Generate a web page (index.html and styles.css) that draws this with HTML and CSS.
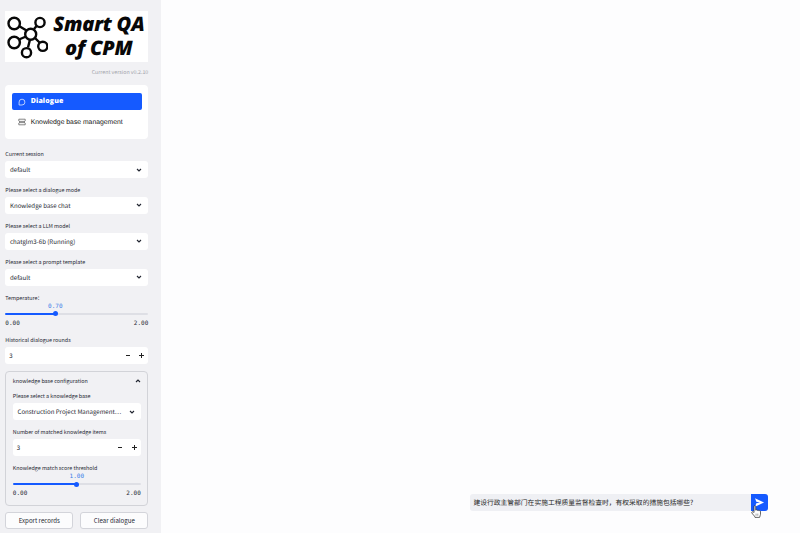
FILE: index.html
```html
<!DOCTYPE html>
<html lang="en">
<head>
<meta charset="utf-8">
<title>Smart QA of CPM</title>
<link rel="stylesheet" href="styles.css">
</head>
<body>
<svg class="defs" width="0" height="0"><symbol id="chev" viewBox="0 0 6 6"><path d="M1 2l2 2 2-2" fill="none" stroke="#222631" stroke-width="1.15"/></symbol></svg>
<aside class="sidebar">
  <div class="logo">
    <svg class="mark" width="44" height="49" viewBox="0 0 44 49" fill="none" stroke="#080808" stroke-width="2.4">
      <path d="M15 15l7.500 4.500M33 14.500l-3 3.500M15 28.500l7-3M26 28.500l-2 8M30.500 26.500l5 5"/>
      <circle cx="10.200" cy="12.500" r="5.700"/><circle cx="36" cy="11.500" r="4.600"/><circle cx="26.700" cy="23.300" r="5.500"/><circle cx="10.200" cy="31.500" r="5.700"/><circle cx="22.500" cy="41.700" r="4.600"/><circle cx="38.800" cy="35.300" r="4.600"/>
    </svg>
    <div class="wordmark">Smart QA<br>of CPM</div>
  </div>
  <div class="version">Current version v0.2.10</div>
  <nav class="nav">
    <a class="item active"><svg width="8" height="8" viewBox="0 0 8 8"><path d="M1.100 7V4a2.900 2.900 0 1 1 2.900 3z" fill="none" stroke="#dfe8ff" stroke-width=".8"/></svg><span>Dialogue</span></a>
    <a class="item"><svg width="8" height="8" viewBox="0 0 8 8" fill="none" stroke="#555" stroke-width=".7"><path d="M.8 1.200h6.400v1.700l-.7.500H1.500l-.7-.5zM1.500 3.400v1.200M6.500 3.400v1.200M.8 6.800h6.400V5.100l-.7-.5H1.500l-.7.5z"/></svg><span>Knowledge base management</span></a>
  </nav>
  <div class="field"><label>Current session</label><div class="control">default<svg><use href="#chev"/></svg></div></div>
  <div class="field"><label>Please select a dialogue mode</label><div class="control">Knowledge base chat<svg><use href="#chev"/></svg></div></div>
  <div class="field"><label>Please select a LLM model</label><div class="control">chatglm3-6b (Running)<svg><use href="#chev"/></svg></div></div>
  <div class="field"><label>Please select a prompt template</label><div class="control">default<svg><use href="#chev"/></svg></div></div>
  <div class="slider temperature"><label>Temperature：</label><div class="value">0.70</div><div class="track"><i></i></div><div class="ends"><span>0.00</span><span>2.00</span></div></div>
  <div class="field rounds"><label>Historical dialogue rounds</label><div class="control number">3<span class="steps"><b class="minus"></b><b class="plus"></b></span></div></div>
  <section class="expander">
    <div class="summary">knowledge base configuration<svg class="up"><use href="#chev"/></svg></div>
    <div class="field"><label>Please select a knowledge base</label><div class="control">Construction Project Management…<svg><use href="#chev"/></svg></div></div>
    <div class="field"><label>Number of matched knowledge items</label><div class="control number">3<span class="steps"><b class="minus"></b><b class="plus"></b></span></div></div>
    <div class="slider threshold"><label>Knowledge match score threshold</label><div class="value">1.00</div><div class="track"><i></i></div><div class="ends"><span>0.00</span><span>2.00</span></div></div>
  </section>
  <div class="buttons"><button>Export records</button><button>Clear dialogue</button></div>
</aside>
<main class="main">
  <div class="chat"><div class="message">建设行政主管部门在实施工程质量监督检查时，有权采取的措施包括哪些?</div><div class="send"><svg width="9" height="9" viewBox="0 0 9 9"><path d="M0 .3l9 4.200-9 4.200 1.300-3.500L5 4.500 1.300 3.800z" fill="#fff"/></svg></div>
    <svg class="cursor" width="11" height="14" viewBox="0 0 10 13"><path d="M2.700 7V1.500c0-1.200 1.600-1.200 1.600 0v3.300c.4-.5 1.300-.4 1.500.2.500-.4 1.200-.2 1.400.3.700-.3 1.500 0 1.500.8v2.600c0 1-.7 1.600-.8 2.800H3.600C3.300 10 1.500 8.800.7 7.400.2 6.400 1.300 5.900 2 6.500z" fill="#fff" stroke="#333" stroke-width=".7"/><path d="M4.600 8v2M6.200 8v2" stroke="#555" stroke-width=".5"/></svg>
  </div>
</main>
</body>
</html>
```
FILE: styles.css
```css
* { box-sizing: border-box; }
body { margin: 0; width: 800px; height: 533px; display: flex; overflow: hidden; background: #fdfdfe; color: #262833; font-family: "Noto Sans CJK SC", "Noto Sans", sans-serif; text-rendering: geometricPrecision; }
.defs { position: absolute; }
.sidebar { width: 161px; height: 533px; padding: 11px 12.700px 0 5.300px; background: #f1f1f4; }
.logo { height: 51px; background: #fff; display: flex; }
.mark { flex: none; margin-left: -1px; }
.wordmark { flex: 1; padding: 1px 0 0 1px; color: #080808; font: italic 800 20px/23.500px "Open Sans", sans-serif; text-align: center; white-space: nowrap; letter-spacing: -.2px; }
.version { height: 23px; line-height: 21px; text-align: right; font-size: 5.300px; color: #a0a1a9; }
.nav { height: 54px; padding: 8px 6.500px; border-radius: 4px; background: #fff; }
.item { display: flex; align-items: center; gap: 5px; height: 17px; padding-left: 6px; border-radius: 2px; font: 6.800px/17px "Liberation Sans", sans-serif; color: #111; }
.item + .item { margin-top: 3.500px; }
.active { background: #155aff; color: #fff; font: 800 7px/18px "Open Sans", sans-serif; letter-spacing: .1px; }
.field { height: 36px; }
label { display: block; height: 12px; line-height: 12px; font-size: 5.350px; white-space: nowrap; }
.nav + .field { margin-top: 9px; height: 35.500px; }
.control { height: 17px; margin-top: 1px; padding: 0 6px 0 4.700px; display: flex; align-items: center; justify-content: space-between; border-radius: 3px; background: #fff; font-size: 6.120px; line-height: 17px; white-space: nowrap; }
.control svg, .up { width: 6px; height: 6px; flex: none; }
.slider { height: 42px; }
.value { height: 7px; width: 20px; font: 6px/7px "DejaVu Sans Mono", monospace; color: #397ee8; text-align: center; }
.track { position: relative; height: 2px; margin-top: 3px; border-radius: 1px; background: linear-gradient(90deg, #155aff 35%, #dedfe5 35%); }
.track i { position: absolute; width: 5px; height: 5px; left: 35%; top: -1.500px; margin-left: -2.500px; border-radius: 50%; background: #155aff; }
.temperature .value { margin-left: 40px; margin-top: -1px; }
.ends { display: flex; justify-content: space-between; margin-top: 5px; font: 6px/8px "DejaVu Sans Mono", monospace; }
.number { padding-left: 4px; padding-right: 4px; }
.steps { display: flex; gap: 9px; align-items: center; }
.minus, .plus { width: 5px; height: 5px; background: linear-gradient(#222, #222) center / 4px 1px no-repeat; }
.plus { background: linear-gradient(#222, #222) center / 5px 1px no-repeat, linear-gradient(#222, #222) center / 1px 5px no-repeat; }
.rounds { height: 37.500px; }
.expander { height: 135px; padding: 0 6.500px; border: 1px solid #d2d3d8; border-radius: 4px; }
.summary { height: 18.300px; display: flex; align-items: center; justify-content: space-between; font-size: 5.350px; }
.up { transform: rotate(180deg); }
.threshold .value { margin: -1px auto 0; }
.threshold .track { background: linear-gradient(90deg, #155aff 50%, #dedfe5 50%); }
.threshold .track i { left: 50%; }
.buttons { display: flex; gap: 7px; margin-top: 6px; }
button { flex: 1; height: 17px; padding: 0; border: 1px solid #d3d4da; border-radius: 3px; background: #fcfcfd; color: #262833; font: 6.120px/15px "Noto Sans CJK SC", sans-serif; white-space: nowrap; }
.main { flex: 1; display: flex; align-items: flex-end; justify-content: flex-end; padding: 0 32px 22px 0; }
.chat { position: relative; width: 298.500px; height: 17px; display: flex; border-radius: 3px; background: #eff0f4; }
.message { flex: 1; padding-left: 4px; font: 6.780px/16px "Noto Sans CJK SC", sans-serif; color: #222; white-space: nowrap; }
.send { width: 17px; display: flex; align-items: center; justify-content: center; border-radius: 0 3px 3px 0; background: #155aff; }
.cursor { position: absolute; left: 281px; top: 11px; }
```
